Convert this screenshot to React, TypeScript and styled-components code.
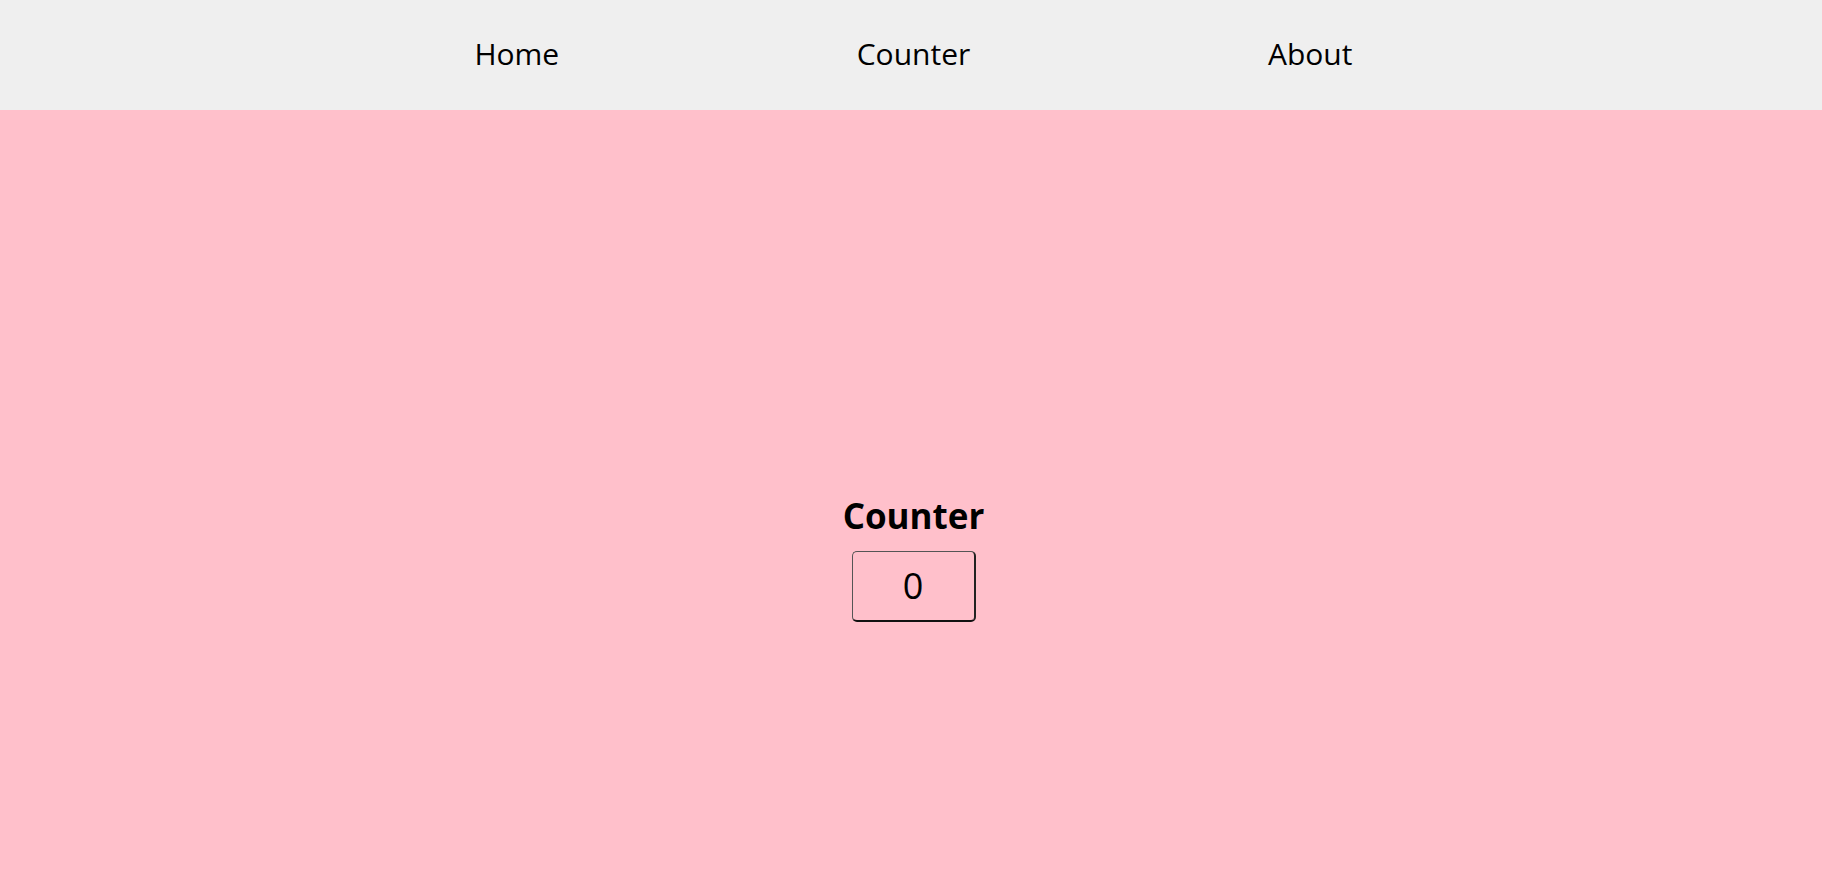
import React, { useState } from "react";
import styled, { createGlobalStyle } from "styled-components";

const GlobalStyle = createGlobalStyle`
  html, body {
    margin: 0;
    padding: 0;
    background: #ffc0cb;
    font-family: "Segoe UI", "Open Sans", "Noto Sans", sans-serif;
  }
  * { box-sizing: border-box; }
`;

const Page = styled.div`
  padding-left: 5px;
  background: #ffc0cb;
`;

const NavBar = styled.nav`
  height: 110px;
  margin-left: -5px;
  padding: 0 0 3px 5px;
  background: #efefef;
  display: flex;
  justify-content: center;
  align-items: center;
`;

const NavList = styled.ul`
  list-style: none;
  margin: 0;
  padding: 0;
  width: 1190px;
  display: grid;
  grid-template-columns: repeat(3, 1fr);
`;

const NavItem = styled.li`
  text-align: center;
`;

const NavLink = styled.a`
  font-size: 30px;
  color: #000;
  text-decoration: none;
  cursor: pointer;
`;

const Main = styled.main`
  min-height: 100vh;
  padding-top: 9px;
  display: flex;
  flex-direction: column;
  align-items: center;
  justify-content: center;
`;

const Title = styled.h1`
  margin: 0 0 10px;
  font-size: 35px;
  font-weight: 700;
  line-height: 50px;
  color: #000;
`;

const CountButton = styled.button`
  width: 124px;
  height: 71px;
  background: transparent;
  border: 1.5px solid #555;
  border-bottom: 2px solid #111;
  border-right: 2px solid #222;
  border-radius: 5px;
  font-family: inherit;
  font-size: 36px;
  color: #000;
  cursor: pointer;
  padding: 0;
`;

export default function App() {
  const [count, setCount] = useState(0);
  return (
    <Page>
      <GlobalStyle />
      <NavBar>
        <NavList>
          <NavItem><NavLink>Home</NavLink></NavItem>
          <NavItem><NavLink>Counter</NavLink></NavItem>
          <NavItem><NavLink>About</NavLink></NavItem>
        </NavList>
      </NavBar>
      <Main>
        <Title>Counter</Title>
        <CountButton onClick={() => setCount(count + 1)}>{count}</CountButton>
      </Main>
    </Page>
  );
}
